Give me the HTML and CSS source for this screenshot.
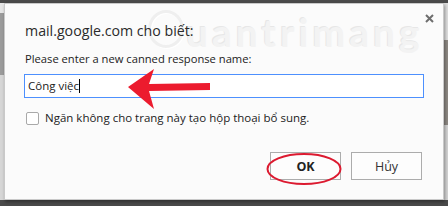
FILE: index.html
```html
<!DOCTYPE html>
<html lang="vi">
<head>
    <meta charset="UTF-8">
    <title>mail.google.com cho biết</title>
    <link rel="stylesheet" href="styles.css">
</head>
<body>
    <div class="backdrop">
        <div class="dialog">
            <span class="close-btn">
                <svg width="9" height="9" viewBox="0 0 9 9"><path d="M1 1 L8 8 M8 1 L1 8" stroke="#6e6e6e" stroke-width="2"/></svg>
            </span>

            <!-- watermark -->
            <div class="watermark">
                <span class="wm-logo"></span>
                <span class="wm-text">uantrimang</span>
            </div>

            <div class="dialog-title">mail.google.com cho biết:</div>
            <div class="dialog-message">Please enter a new canned response name:</div>
            <div class="prompt-input">Công việc<span class="caret"></span></div>

            <label class="suppress-row">
                <span class="checkbox"></span>
                <span>Ngăn không cho trang này tạo hộp thoại bổ sung.</span>
            </label>

            <div class="button-row">
                <button class="btn btn-ok">OK</button>
                <button class="btn">Hủy</button>
            </div>

            <!-- annotations -->
            <svg class="arrow" width="90" height="44" viewBox="0 0 90 44">
                <path d="M0 18 L26 0 L21 15 L82 14 L82 21 L21 22 L26 40 Z" fill="#ec1b2e"/>
            </svg>
            <svg class="ring" width="80" height="36" viewBox="0 0 80 36">
                <ellipse cx="40" cy="18" rx="36.5" ry="15" fill="none" stroke="#dc1a30" stroke-width="2"/>
            </svg>
        </div>
    </div>
</body>
</html>
```

FILE: styles.css
```css
* {
    margin: 0;
    padding: 0;
    box-sizing: border-box;
}

body {
    width: 448px;
    height: 206px;
    overflow: hidden;
    background: #4a4a4a;
    font-family: "Open Sans", "Noto Sans", Arial, sans-serif;
    color: #333;
}

.backdrop {
    height: 206px;
    padding: 3px 4px 6px 4px;
    background:
        linear-gradient(#4a4a4a 0 3px, #e6e6e6 3px 13px, #9b9b9b 13px 75px, #d6d6d6 75px 200px, #4a4a4a 200px) left / 4px 100% no-repeat,
        linear-gradient(#4a4a4a 0 3px, #dcdcdc 3px 40px, #8c8782 40px 125px, #d2d2d2 125px 200px, #4a4a4a 200px) right / 4px 100% no-repeat,
        #4a4a4a;
}

.dialog {
    position: relative;
    width: 440px;
    height: 197px;
    background: #fbfbfb;
    border: 1px solid #c9c9c9;
    box-shadow: 1px 2px 3px rgba(0,0,0,0.35);
    padding: 16px 21px 0 19px;
}

.close-btn {
    position: absolute;
    right: 9px;
    top: 10px;
    line-height: 0;
}

.watermark {
    position: absolute;
    left: 143px;
    top: 6px;
    display: flex;
    align-items: flex-end;
    pointer-events: none;
}

.wm-logo {
    width: 36px;
    height: 38px;
    border-radius: 50%;
    border: 3px solid #efefef;
    box-shadow: 1px 1px 0 #fff inset, 1px 1px 0 #fff;
}

.wm-text {
    font-family: "Lato", "Open Sans", sans-serif;
    font-weight: bold;
    font-size: 39px;
    line-height: 38px;
    letter-spacing: 4px;
    color: #f3f3f3;
    text-shadow: -1px -1px 0 #e7e7e7;
    margin-left: 2px;
    margin-bottom: -3px;
}

.dialog-title {
    position: relative;
    font-size: 14.2px;
    line-height: 22px;
    padding-left: 1px;
    color: #2b2b2b;
}

.dialog-message {
    position: relative;
    font-size: 11.2px;
    line-height: 16px;
    margin-top: 9px;
    padding-left: 1px;
    color: #222;
}

.prompt-input {
    position: relative;
    width: 400px;
    height: 24px;
    margin-top: 7px;
    border: 1px solid #4d90fe;
    background: #fff;
    font-size: 11.5px;
    line-height: 22px;
    padding-left: 3px;
    color: #222;
}

.caret {
    display: inline-block;
    width: 1px;
    height: 14px;
    background: #000;
    vertical-align: -3px;
}

.suppress-row {
    display: flex;
    align-items: center;
    gap: 6px;
    margin-top: 12px;
    padding-left: 2px;
    font-size: 11.5px;
    line-height: 16px;
    color: #222;
}

.checkbox {
    width: 13px;
    height: 13px;
    border: 1px solid #a9a9a9;
    border-radius: 2px;
    background: #fff;
}

.button-row {
    display: flex;
    justify-content: flex-end;
    gap: 10px;
    margin-top: 26px;
}

.btn {
    width: 71px;
    height: 28px;
    border: 1px solid #acacac;
    background: #fdfdfd;
    font-family: "Open Sans", "Noto Sans", Arial, sans-serif;
    font-size: 12.5px;
    color: #333;
}

.btn-ok {
    font-weight: bold;
    color: #222;
}

.arrow {
    position: absolute;
    left: 123px;
    top: 65px;
}

.ring {
    position: absolute;
    left: 259px;
    top: 147px;
}
```
